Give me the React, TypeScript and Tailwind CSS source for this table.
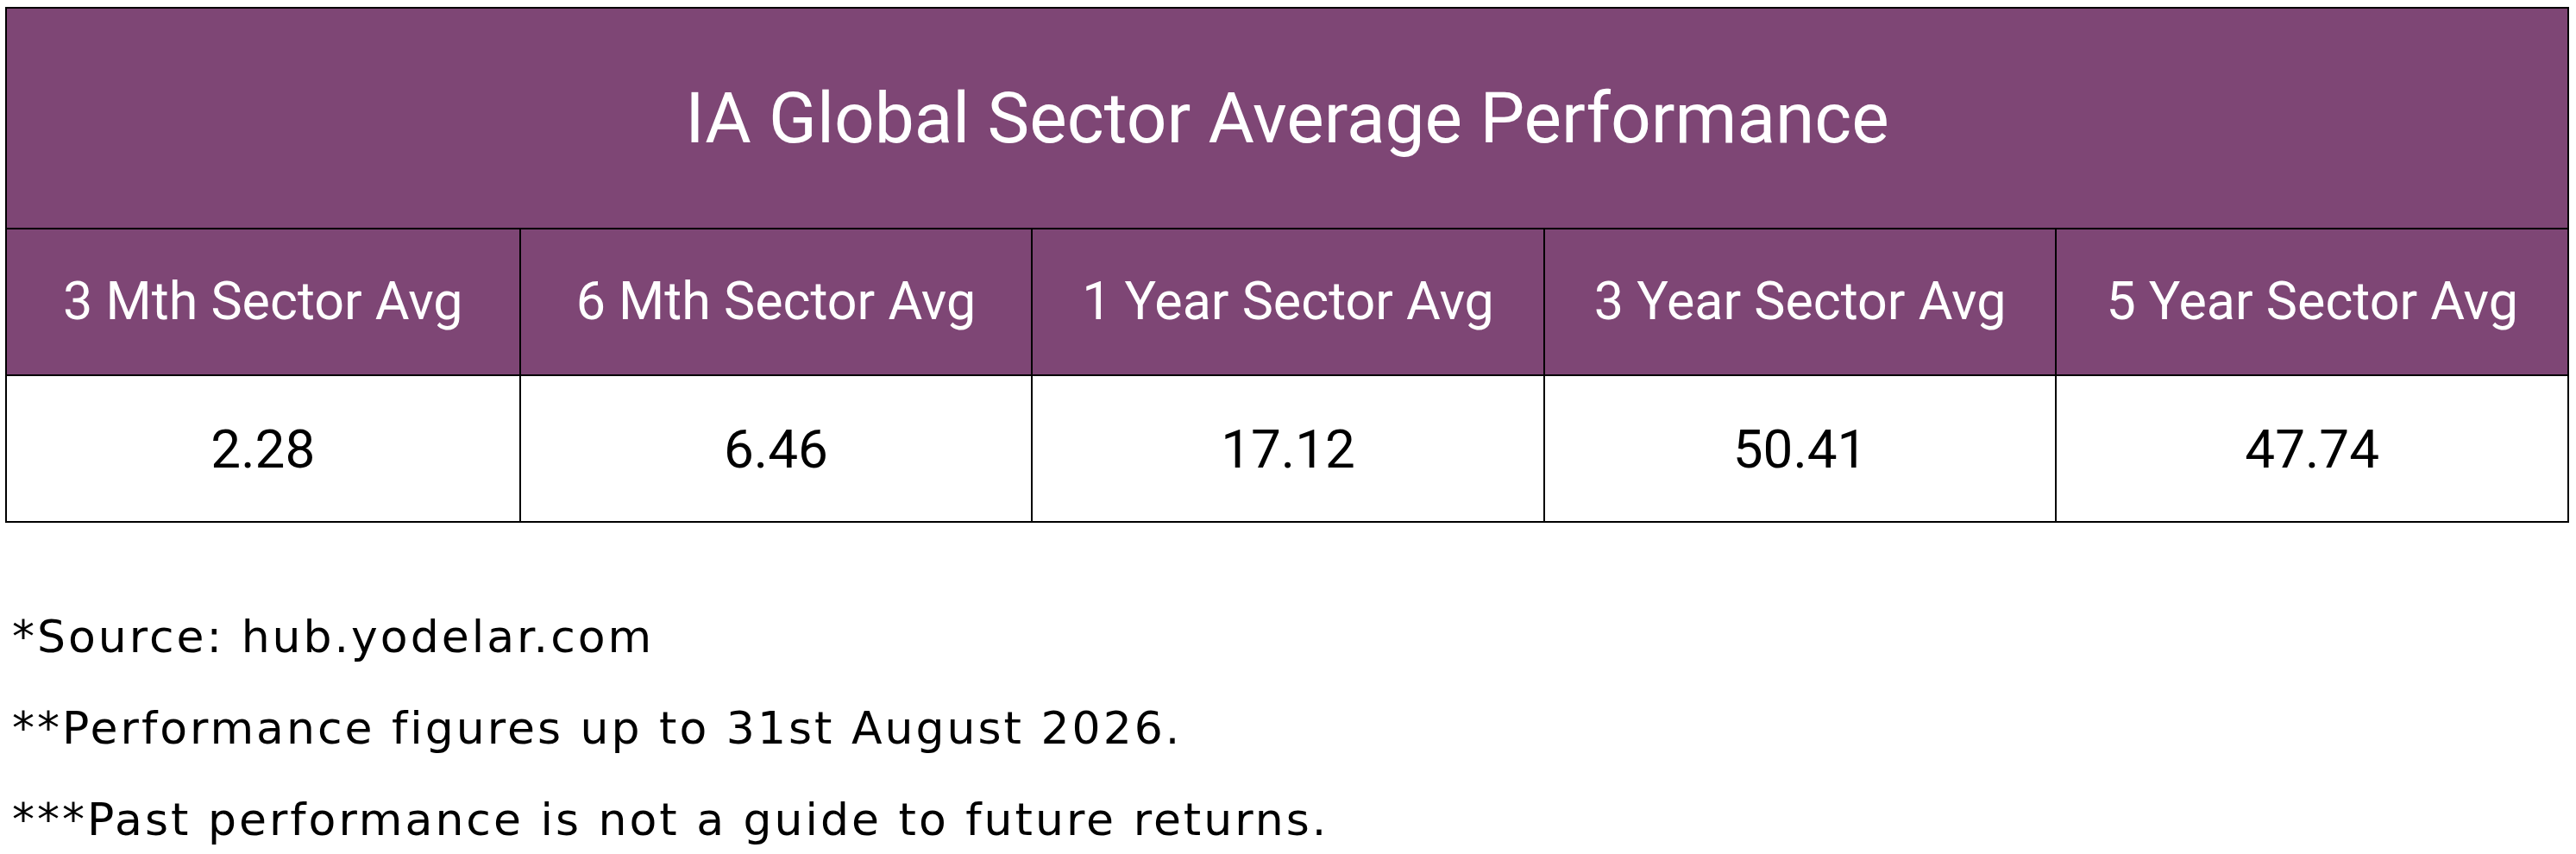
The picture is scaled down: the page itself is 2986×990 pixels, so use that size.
const headers = [
  "3 Mth Sector Avg",
  "6 Mth Sector Avg",
  "1 Year Sector Avg",
  "3 Year Sector Avg",
  "5 Year Sector Avg",
];

const values = ["2.28", "6.46", "17.12", "50.41", "47.74"];

const notes = [
  "*Source: hub.yodelar.com",
  "**Performance figures up to 31st August 2026.",
  "***Past performance is not a guide to future returns.",
];

export default function App() {
  return (
    <div className="min-h-screen bg-white pl-[6px] pt-[8px] font-['Roboto',sans-serif]">
      <div className="w-[2972px] border-2 border-black">
        <div className="flex h-[256px] items-center justify-center border-b-2 border-black bg-[#7e4675] text-[82px] text-white">
          IA Global Sector Average Performance
        </div>

        <div className="grid h-[170px] grid-cols-5 border-b-2 border-black bg-[#7e4675]">
          {headers.map((h, i) => (
            <div
              key={h}
              className={`flex items-center justify-center text-[61px] text-white ${i > 0 ? "border-l-2 border-black" : ""}`}
            >
              {h}
            </div>
          ))}
        </div>

        <div className="grid h-[168px] grid-cols-5 bg-white">
          {values.map((v, i) => (
            <div
              key={v}
              className={`flex items-center justify-center text-[62px] text-black ${i > 0 ? "border-l-2 border-black" : ""}`}
            >
              {v}
            </div>
          ))}
        </div>
      </div>

      <div className="mt-[79px] pl-[8px] font-['DejaVu_Sans',sans-serif] text-[52px] tracking-[3px] text-black">
        {notes.map((n) => (
          <p key={n} className="leading-[106px]">
            {n}
          </p>
        ))}
      </div>
    </div>
  );
}
